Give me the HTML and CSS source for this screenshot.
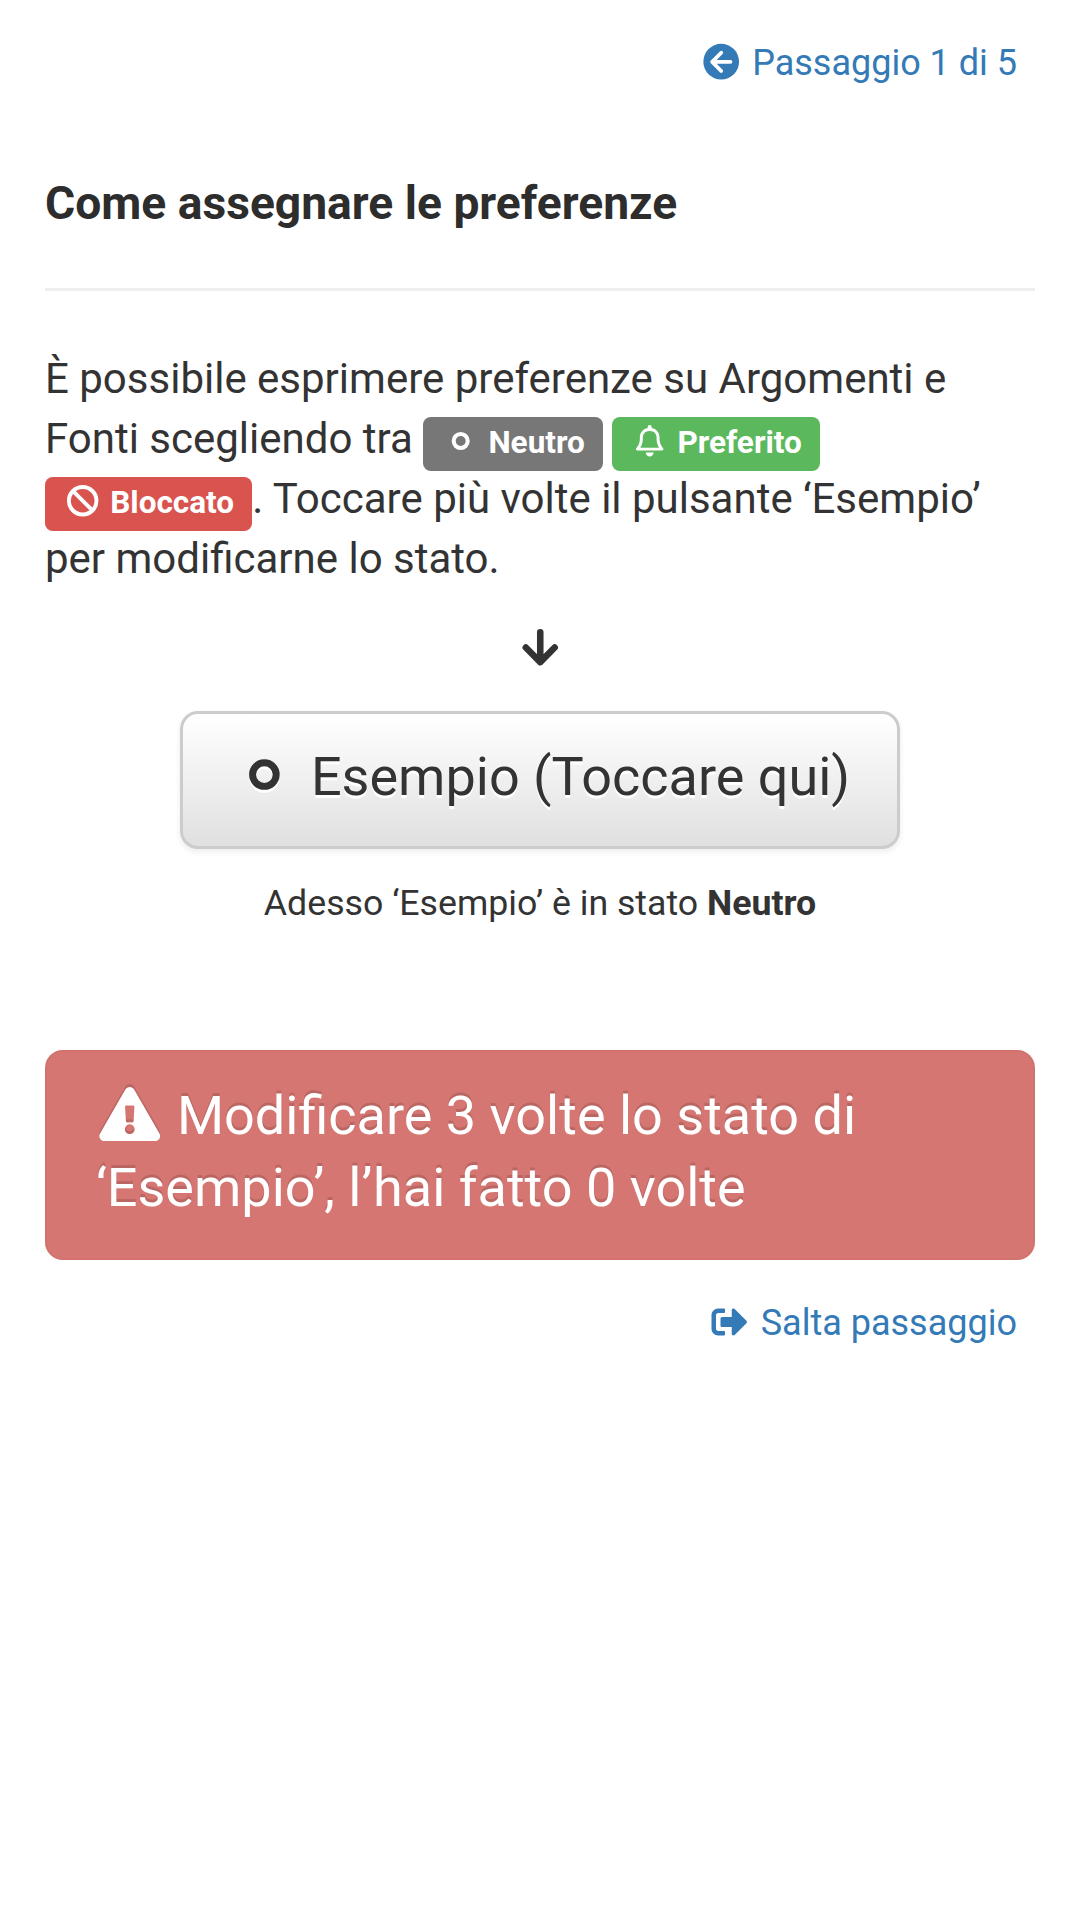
FILE: index.html
```html
<!DOCTYPE html>
<html lang="it">
<head>
<meta charset="utf-8">
<title>Come assegnare le preferenze</title>
<link rel="stylesheet" href="styles.css">
</head>
<body>
<main class="page">
  <nav class="step-nav">
    <a class="link" href="#"><svg class="icon" viewBox="0 0 640 512"><circle cx="330" cy="252" r="254" fill="currentColor"/><path d="M462 254H202M330 124L202 254L330 384" fill="none" stroke="#fff" stroke-width="54" stroke-linecap="round" stroke-linejoin="round"/></svg> Passaggio 1 di 5</a>
  </nav>
  <h1 class="title">Come assegnare le preferenze</h1>
  <hr class="rule">
  <p class="intro">È possibile esprimere preferenze su Argomenti e Fonti scegliendo tra <span class="label neutral"><svg class="icon" viewBox="0 0 640 512"><circle cx="320" cy="260" r="114" fill="none" stroke="currentColor" stroke-width="66"/></svg> Neutro</span> <span class="label favorite"><svg class="icon" viewBox="-96 0 640 512"><path fill="currentColor" fill-rule="evenodd" d="M224 0C206.300 0 192 14.300 192 32V49.900C119.500 61.400 64 124.200 64 200V233.400C64 278.800 48.500 322.900 20.200 358.400L5.300 377C-.5 384.200-1.600 394.100 2.400 402.400S14.800 416 24 416H424C433.200 416 441.600 410.700 445.600 402.400S448.500 384.200 442.700 377L427.800 358.400C399.500 322.900 384 278.800 384 233.400V200C384 124.200 328.500 61.400 256 49.900V32C256 14.300 241.700 0 224 0ZM216 96H232C289.400 96 336 142.600 336 200V233.400C336 281.300 349.900 328 375.700 368H72.300C98.100 328 112 281.300 112 233.400V200C112 142.600 158.600 96 216 96ZM160 448C160 483.300 188.700 512 224 512S288 483.300 288 448Z"/></svg> Preferito</span> <span class="label blocked"><svg class="icon" viewBox="0 0 640 512"><g fill="none" stroke="currentColor" stroke-width="64"><circle cx="320" cy="256" r="224"/><path d="M160 96L480 416"/></g></svg> Bloccato</span>. Toccare più volte il pulsante ‘Esempio’ per modificarne lo stato.</p>
  <div class="pointer"><svg class="icon" viewBox="0 0 640 512"><path d="M320 78V440M144 262L320 440L496 262" fill="none" stroke="currentColor" stroke-width="80" stroke-linecap="round" stroke-linejoin="round"/></svg></div>
  <button class="example" type="button"><svg class="icon" viewBox="0 0 640 512"><circle cx="326" cy="252" r="112" fill="none" stroke="currentColor" stroke-width="66"/></svg> Esempio (Toccare qui)</button>
  <p class="status">Adesso ‘Esempio’ è in stato <strong>Neutro</strong></p>
  <div class="alert"><svg class="icon" viewBox="-32 0 640 512"><path fill="currentColor" d="M569.517 440.013C587.975 472.007 564.806 512 527.94 512H48.054c-36.937 0-59.999-40.055-41.577-71.987L246.423 23.985c18.467-32.009 64.72-31.951 83.154 0l239.940 416.028zM288 354c-25.405 0-46 20.595-46 46s20.595 46 46 46 46-20.595 46-46-20.595-46-46-46zm-43.673-165.346l7.418 136c.347 6.364 5.609 11.346 11.982 11.346h48.546c6.373 0 11.635-4.982 11.982-11.346l7.418-136c.375-6.874-5.098-12.654-11.982-12.654h-63.383c-6.884 0-12.356 5.780-11.981 12.654z"/></svg> Modificare 3 volte lo stato di ‘Esempio’, l’hai fatto 0 volte</div>
  <nav class="step-nav">
    <a class="link" href="#"><svg class="icon" viewBox="-64 0 640 512"><path fill="currentColor" d="M497 273L329 441c-15 15-41 4.500-41-17v-96H152c-13.300 0-24-10.700-24-24v-96c0-13.300 10.700-24 24-24h136v-96c0-21.400 25.900-32 41-17l168 168c9.300 9.400 9.300 24.600 0 34zM192 436v-40c0-6.600-5.400-12-12-12H96c-17.700 0-32-14.300-32-32V160c0-17.700 14.300-32 32-32h84c6.600 0 12-5.400 12-12V76c0-6.600-5.400-12-12-12H96c-53 0-96 43-96 96v192c0 53 43 96 96 96h84c6.600 0 12-5.400 12-12z"/></svg> Salta passaggio</a>
  </nav>
</main>
</body>
</html>
```
FILE: styles.css
```css
* {
  box-sizing: border-box;
}

body {
  margin: 0;
  background: #fff;
  color: #333;
  font-family: Roboto, sans-serif;
  font-size: 42px;
  line-height: 60px;
}

.page {
  display: flex;
  flex-direction: column;
  padding: 37px 45px 0;
}

.icon {
  width: 1.25em;
  height: 1em;
  vertical-align: -.125em;
  overflow: visible;
}

.step-nav {
  display: flex;
  justify-content: flex-end;
  padding-right: 18px;
  font-size: 36px;
  line-height: 52px;
}

.link {
  color: #337ab7;
  text-decoration: none;
}

.title {
  margin: 89px 0 60px;
  color: #2d2d2d;
  font-size: 46.2px;
  font-weight: 700;
  line-height: 50px;
}

.rule {
  width: 100%;
  height: 3px;
  margin: 0 0 58px;
  border: 0;
  background: #eee;
}

.intro {
  margin: 0 0 30px;
}

.label {
  padding: 7px 18px 10px;
  border-radius: .25em;
  color: #fff;
  font-size: 75%;
  font-weight: 700;
  line-height: 1;
  white-space: nowrap;
}

.neutral {
  background: #777;
}

.favorite {
  margin-left: -1px;
  background: #5cb85c;
}

.blocked {
  background: #d9534f;
}

.pointer {
  margin-bottom: 32px;
  text-align: center;
}

.example {
  align-self: center;
  width: 720px;
  height: 138px;
  padding: 27px 49px 33px 47px;
  border: 3px solid #ccc;
  border-radius: 18px;
  background: linear-gradient(#fff, #e0e0e0);
  box-shadow: 0 3px 6px rgba(0, 0, 0, .075);
  color: #333;
  font: 54px/72px Roboto, sans-serif;
  text-shadow: 0 3px 0 #fff;
  white-space: nowrap;
}

.example .icon {
  filter: drop-shadow(0 3px 0 #fff);
}

.status {
  margin: 28px 0 121px;
  font-size: 35.7px;
  line-height: 52px;
  text-align: center;
}

.alert {
  margin-bottom: 37px;
  padding: 30px 51px 36px;
  border-radius: 18px;
  background: #d67672;
  box-shadow: inset 0 0 3px rgba(150, 60, 60, .2);
  color: #fff;
  font-size: 54px;
  line-height: 72px;
  text-shadow: 0 -3px 0 rgba(0, 0, 0, .13);
}

.alert .icon {
  filter: drop-shadow(0 -3px 0 rgba(0, 0, 0, .13));
}
```
